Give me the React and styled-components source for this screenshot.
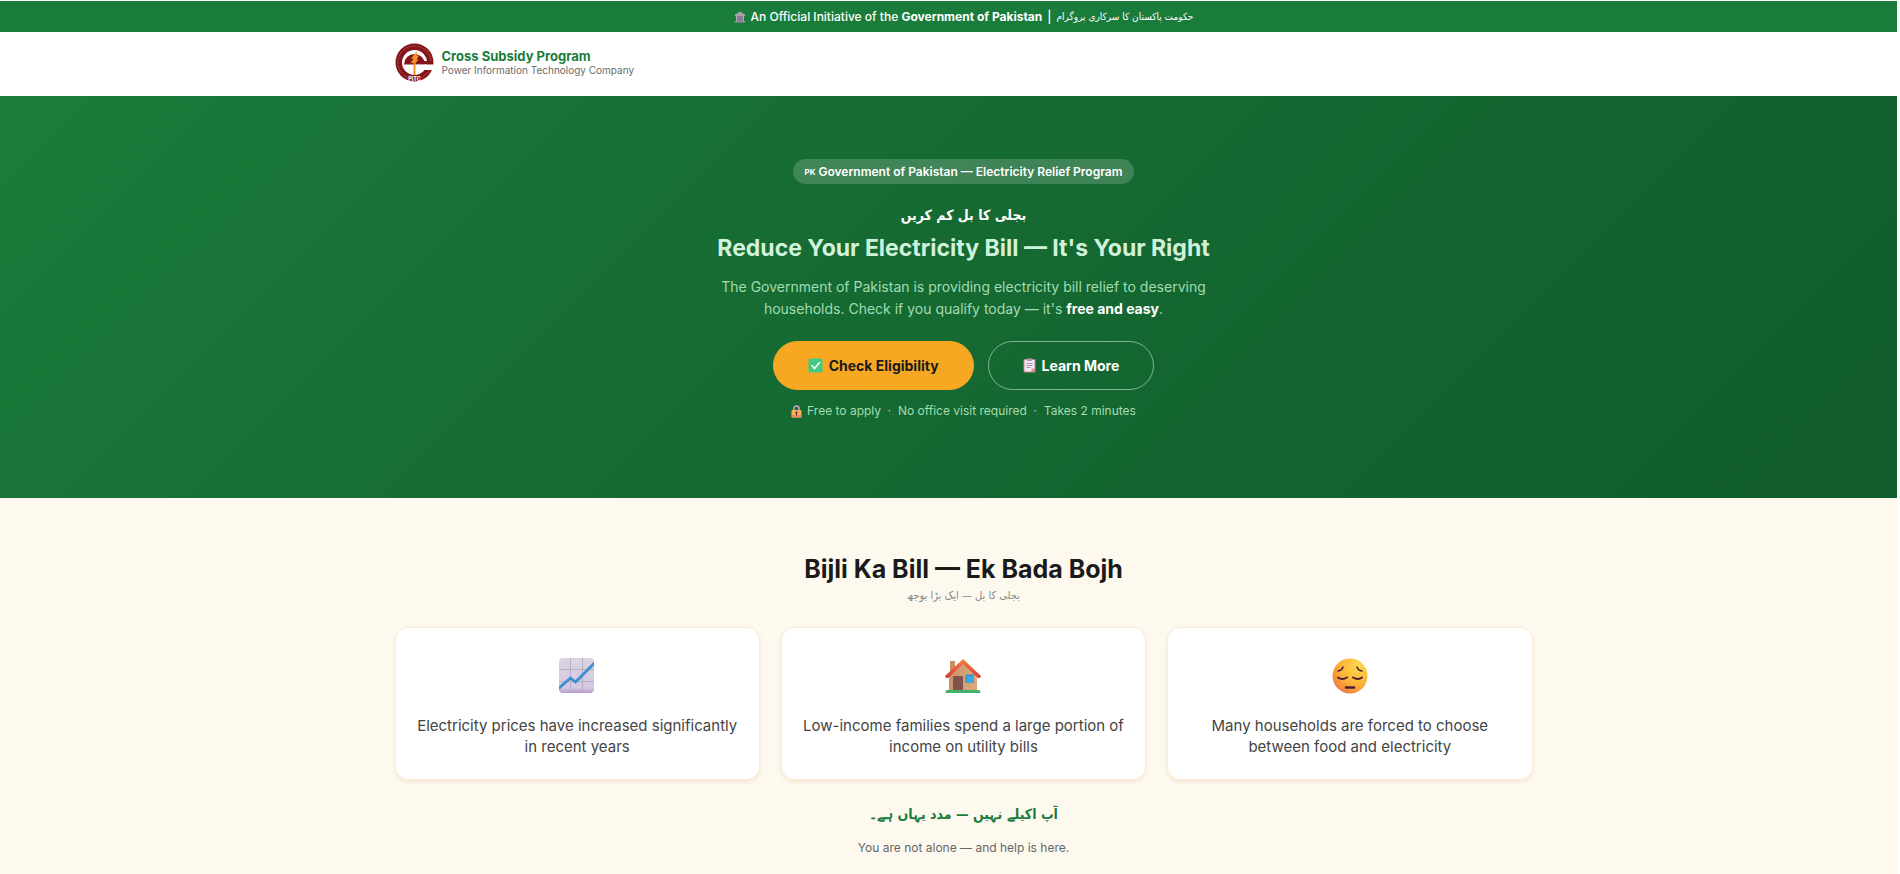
import React from "react";
import styled, { createGlobalStyle } from "styled-components";

const GlobalStyle = createGlobalStyle`
  * {
    box-sizing: border-box;
  }

  body {
    margin: 0;
    background: #ffffff;
    color: #1a1a1a;
    font-family: Inter, "Open Sans", sans-serif;
    font-size: 14px;
  }

  h1, h2, p {
    margin: 0;
  }
`;

// Layout
const Page = styled.div`
  min-height: 100vh;
  padding: 1px 3px 0 0;
  display: flex;
  flex-direction: column;
`;

const Band = styled.div`
  padding-left: 30px;
`;

const Container = styled.div`
  max-width: 1138px;
  margin: 0 auto;
`;

const Urdu = styled.p`
  font-family: "DejaVu Sans Condensed", "DejaVu Sans", sans-serif;
  font-size: ${(props) => props.$size}px;
  font-weight: ${(props) => (props.$bold ? 700 : 400)};
  line-height: ${(props) => props.$line}px;
  color: ${(props) => props.$color};
`;

// Top bar
const TopBar = styled(Band)`
  display: flex;
  align-items: center;
  justify-content: center;
  gap: 5px;
  height: 31px;
  background: #1a7c3b;
  color: #ffffff;
  font-size: 12px;
  font-weight: 500;
`;

const TopBarUrdu = styled.span`
  font-family: "DejaVu Sans Condensed", "DejaVu Sans", sans-serif;
  font-size: 10px;
  font-weight: 400;
`;

// Header
const Header = styled.header`
  padding-left: 30px;
  background: #ffffff;
`;

const Brand = styled(Container)`
  display: flex;
  align-items: center;
  gap: 8px;
  height: 64px;
  padding-bottom: 3px;
`;

const BrandName = styled.p`
  font-size: 13px;
  font-weight: 700;
  line-height: 14px;
  color: #1a7c3b;
`;

const BrandTagline = styled.p`
  font-size: 10px;
  line-height: 14px;
  color: #6b6b6b;
`;

// Hero
const Hero = styled.section`
  display: flex;
  flex-direction: column;
  align-items: center;
  padding: 63px 0 78px 30px;
  background: linear-gradient(135deg, #1a7c3b 0%, #166c33 40%, #105c2a 100%);
  text-align: center;
`;

const Badge = styled.span`
  display: flex;
  align-items: center;
  gap: 3px;
  height: 25px;
  margin-bottom: 15px;
  padding: 0 11px;
  border-radius: 13px;
  background: rgba(255, 255, 255, 0.18);
  color: #ffffff;
  font-size: 12px;
  font-weight: 600;
`;

const CountryCode = styled.small`
  font-size: 8px;
  font-weight: 700;
`;

const HeroTitle = styled.h1`
  font-size: 23px;
  font-weight: 700;
  line-height: 34px;
  color: #d1f2da;
`;

const HeroText = styled.p`
  max-width: 500px;
  margin-top: 11px;
  font-size: 14px;
  line-height: 22px;
  color: #a3dcb2;

  strong {
    color: #ffffff;
  }
`;

const Actions = styled.div`
  display: flex;
  gap: 14px;
  margin-top: 21px;
`;

const Button = styled.button`
  display: flex;
  align-items: center;
  gap: 6px;
  height: 49px;
  padding: 0 34px;
  border: 1px solid ${(props) => (props.$primary ? "#f7a823" : "#82b592")};
  border-radius: 25px;
  background: ${(props) => (props.$primary ? "#f7a823" : "transparent")};
  color: ${(props) => (props.$primary ? "#1a1a1a" : "#ffffff")};
  font-family: inherit;
  font-size: 14px;
  font-weight: 700;
  cursor: pointer;
`;

const Note = styled.p`
  display: flex;
  align-items: center;
  gap: 5px;
  margin-top: 12px;
  font-size: 12px;
  line-height: 18px;
  color: #a3dcb2;
`;

// Problem section
const Problem = styled.section`
  flex: 1;
  padding: 53px 0 16px 30px;
  background: #fef9ee;
  text-align: center;
`;

const SectionTitle = styled.h2`
  font-size: 25px;
  font-weight: 700;
  line-height: 36px;
`;

const Cards = styled.div`
  display: grid;
  grid-template-columns: repeat(3, 1fr);
  gap: 21px;
  margin: 22px 0 19px;
`;

const Card = styled.article`
  padding: 30px 20px 22px;
  border: 1px solid #fdebd5;
  border-radius: 13px;
  background: #ffffff;
  box-shadow: 0 2px 4px rgba(120, 90, 30, 0.1);
`;

const CardIcon = styled.div`
  height: 36px;
  margin-bottom: 21px;
`;

const CardText = styled.p`
  max-width: 324px;
  margin: 0 auto;
  font-size: 15px;
  line-height: 21px;
  color: #444444;
`;

const HelpText = styled.p`
  margin-top: 10px;
  font-size: 12px;
  line-height: 18px;
  color: #666666;
`;

// Icons
const Logo = () => (
  <svg width="39" height="39" viewBox="0 0 78 78" role="img" aria-label="PITC">
    <circle cx="39" cy="39" r="38" fill="#861519" />
    <circle cx="39" cy="39" r="33" fill="none" stroke="#b5716d" strokeWidth="2" strokeDasharray="2 2" />
    <circle cx="39" cy="39" r="25" fill="#ffffff" />
    <path d="M18 43a21 21 0 0 1 42 0z" fill="#861519" />
    <path d="M39 36h37v7H39z" fill="#861519" />
    <path d="M39 43h39v11H39z" fill="#ffffff" />
    <path d="M44 16L32 31h5l-6 10 6-2v25h4V40l6-7h-4l5-8h-5z" fill="#f5952c" />
    <text x="39" y="75" textAnchor="middle" fontSize="11" fontWeight="700" fill="#ffffff">
      PITC
    </text>
  </svg>
);

const BankIcon = () => (
  <svg width="12" height="12" viewBox="0 0 24 24" aria-hidden="true">
    <path d="M12 1L2 7v3h20V7z" fill="#a69fac" />
    <path d="M4 10h16v10H4z" fill="#54485e" />
    <path d="M4 10h3v10H4zM9 10h2v10H9zM13 10h2v10h-2zM17 10h3v10h-3z" fill="#b7b0bc" />
    <path d="M1 20h22v3H1z" fill="#948b9b" />
  </svg>
);

const CheckIcon = () => (
  <svg width="15" height="15" viewBox="0 0 30 30" aria-hidden="true">
    <rect x="1" y="1" width="28" height="28" rx="3" fill="#43c983" />
    <path d="M8 15l5 6 10-12" fill="none" stroke="#ffffff" strokeWidth="3" strokeLinecap="round" />
  </svg>
);

const ClipboardIcon = () => (
  <svg width="13" height="15" viewBox="0 0 26 30" aria-hidden="true">
    <rect x="1" y="2" width="24" height="27" rx="2" fill="#c98291" />
    <path d="M3 4h20v17l-6 6H3z" fill="#f1e9f7" />
    <path d="M17 27v-6h6z" fill="#f09a72" />
    <path d="M8 1h10v5H8z" fill="#a99bb7" />
    <path d="M7 11h12M7 15h12M7 19h8" stroke="#a596b4" strokeWidth="2" />
  </svg>
);

const LockIcon = () => (
  <svg width="11" height="13" viewBox="0 0 22 26" aria-hidden="true">
    <path d="M6 12V7a5 5 0 0 1 10 0v5" fill="none" stroke="#bcb0b5" strokeWidth="3" />
    <rect x="1" y="10" width="20" height="15" rx="2" fill="#fbac55" />
    <path d="M1 20h20v3a2 2 0 0 1-2 2H3a2 2 0 0 1-2-2z" fill="#f08a5a" />
    <circle cx="11" cy="15" r="2" fill="#46263b" />
    <path d="M10 15h2v6h-2z" fill="#46263b" />
  </svg>
);

const ChartIcon = () => (
  <svg width="36" height="36" viewBox="0 0 36 36" aria-hidden="true">
    <defs>
      <linearGradient id="chartPaper" x1="0" y1="0" x2="0" y2="1">
        <stop offset="0" stopColor="#d9d5df" />
        <stop offset="0.85" stopColor="#d5c8e3" />
        <stop offset="1" stopColor="#b59bcb" />
      </linearGradient>
      <clipPath id="chartClip">
        <rect width="35" height="35" rx="4" />
      </clipPath>
    </defs>
    <g clipPath="url(#chartClip)">
      <rect width="35" height="35" fill="url(#chartPaper)" />
      <path d="M11.500 0v35M23.500 0v35M0 11.500h35M0 23.500h35" stroke="#b9adc5" />
      <path d="M-1 31L11.500 20l5 4L36 4.500" fill="none" stroke="#3e8fd0" strokeWidth="2.800" />
    </g>
  </svg>
);

const HouseIcon = () => (
  <svg width="36" height="36" viewBox="0 0 36 36" aria-hidden="true">
    <defs>
      <linearGradient id="houseWall" x1="0" y1="0" x2="1" y2="0">
        <stop offset="0" stopColor="#c8926b" />
        <stop offset="1" stopColor="#dfa980" />
      </linearGradient>
      <linearGradient id="houseRoof" x1="0" y1="0" x2="0" y2="1">
        <stop offset="0" stopColor="#f5813f" />
        <stop offset="1" stopColor="#d63c38" />
      </linearGradient>
    </defs>
    <path d="M5 3h5v13H5z" fill="#c78f5e" />
    <path d="M4 18L18 5l14 13v15H4z" fill="url(#houseWall)" />
    <path d="M18 1L0 18l1 2h2L18 6l15 14h2l1-2z" fill="url(#houseRoof)" />
    <rect x="8" y="18" width="10" height="14" rx="1" fill="#80534d" />
    <rect x="21" y="17" width="8" height="8" rx="1" fill="#39a9e0" />
    <path d="M21 25V18a1 1 0 0 1 1-1h7" fill="none" stroke="#2783c2" />
    <path d="M2 32h32a2 2 0 0 1 1 3H1a2 2 0 0 1 1-3z" fill="#3fb36a" />
  </svg>
);

const PensiveIcon = () => (
  <svg width="36" height="36" viewBox="0 0 36 36" aria-hidden="true">
    <defs>
      <radialGradient id="faceSkin" cx="0.75" cy="0.2" r="0.95">
        <stop offset="0" stopColor="#ffd94f" />
        <stop offset="0.6" stopColor="#fbb036" />
        <stop offset="0.85" stopColor="#f38b3c" />
        <stop offset="1" stopColor="#e0686b" />
      </radialGradient>
    </defs>
    <circle cx="18" cy="18" r="17.500" fill="url(#faceSkin)" />
    <g fill="none" stroke="#4b2036" strokeWidth="2" strokeLinecap="round">
      <path d="M6 13q4-.5 5-4M30 13q-4-.5-5-4" strokeWidth="1.500" />
      <path d="M6 19.500q4 3 9 0M21 19.500q5 3 9 0" />
      <path d="M14 29.500h8" strokeWidth="2.500" />
    </g>
  </svg>
);

const problems = [
  { icon: <ChartIcon />, text: "Electricity prices have increased significantly in recent years" },
  { icon: <HouseIcon />, text: "Low-income families spend a large portion of income on utility bills" },
  { icon: <PensiveIcon />, text: "Many households are forced to choose between food and electricity" },
];

const App = () => {
  return (
    <Page>
      <GlobalStyle />

      <TopBar>
        <BankIcon />
        <span>
          An Official Initiative of the <strong>Government of Pakistan</strong>
        </span>
        <span>|</span>
        <TopBarUrdu lang="ur" dir="rtl">
          حکومت پاکستان کا سرکاری پروگرام
        </TopBarUrdu>
      </TopBar>

      <Header>
        <Brand>
          <Logo />
          <div>
            <BrandName>Cross Subsidy Program</BrandName>
            <BrandTagline>Power Information Technology Company</BrandTagline>
          </div>
        </Brand>
      </Header>

      <Hero>
        <Badge>
          <CountryCode>PK</CountryCode>
          Government of Pakistan — Electricity Relief Program
        </Badge>
        <Urdu lang="ur" dir="rtl" $size={14} $line={32} $color="#ffffff" $bold>
          بجلی کا بل کم کریں
        </Urdu>
        <HeroTitle>Reduce Your Electricity Bill — It's Your Right</HeroTitle>
        <HeroText>
          The Government of Pakistan is providing electricity bill relief to
          deserving households. Check if you qualify today — it's{" "}
          <strong>free and easy</strong>.
        </HeroText>
        <Actions>
          <Button type="button" $primary>
            <CheckIcon />
            Check Eligibility
          </Button>
          <Button type="button">
            <ClipboardIcon />
            Learn More
          </Button>
        </Actions>
        <Note>
          <LockIcon />
          <span>Free to apply &nbsp;·&nbsp; No office visit required &nbsp;·&nbsp; Takes 2 minutes</span>
        </Note>
      </Hero>

      <Problem>
        <Container>
          <SectionTitle>Bijli Ka Bill — Ek Bada Bojh</SectionTitle>
          <Urdu lang="ur" dir="rtl" $size={11} $line={18} $color="#888888">
            بجلی کا بل — ایک بڑا بوجھ
          </Urdu>
          <Cards>
            {problems.map((problem) => (
              <Card key={problem.text}>
                <CardIcon>{problem.icon}</CardIcon>
                <CardText>{problem.text}</CardText>
              </Card>
            ))}
          </Cards>
          <Urdu lang="ur" dir="rtl" $size={14} $line={30} $color="#1a7c3b" $bold>
            آپ اکیلے نہیں — مدد یہاں ہے۔
          </Urdu>
          <HelpText>You are not alone — and help is here.</HelpText>
        </Container>
      </Problem>
    </Page>
  );
};

export default App;
